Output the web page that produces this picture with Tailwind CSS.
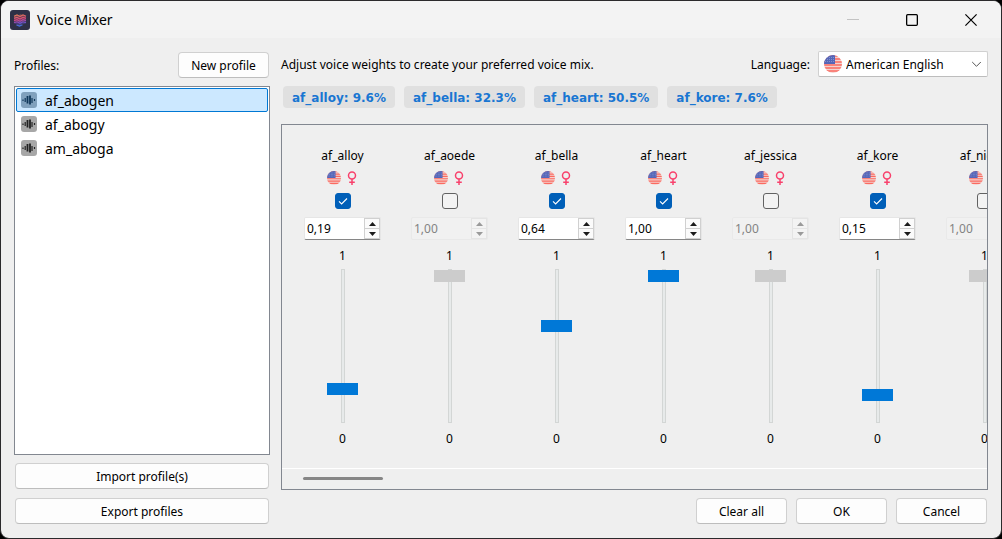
<!DOCTYPE html>
<html lang="en">
<head>
<meta charset="utf-8">
<meta name="viewport" content="width=device-width, initial-scale=1">
<title>Voice Mixer</title>
<script src="https://cdn.jsdelivr.net/npm/@tailwindcss/browser@4"></script>
</head>
<body class="bg-black">
<svg class="absolute size-0" aria-hidden="true">
  <defs>
    <clipPath id="disc"><circle cx="9" cy="9" r="9"/></clipPath>
    <symbol id="flag" viewBox="0 0 18 18">
      <g clip-path="url(#disc)">
        <rect width="18" height="18" fill="#f3d3cf"/>
        <path d="M0 1h18M0 4h18M0 7h18M0 10h18M0 13h18M0 16h18" stroke="#fb6a60" stroke-width="1.5"/>
        <rect width="11" height="9" fill="#5566b8"/>
        <path d="M1 2.500h10M1 4.500h10M1 6.500h10" stroke="#8d99d2" stroke-width=".8" stroke-dasharray="1 1"/>
      </g>
    </symbol>
    <symbol id="female" viewBox="0 0 10 14">
      <g fill="none" stroke="#f8416c" stroke-width="1.500">
        <circle cx="5" cy="4.500" r="3.500"/><path d="M5 8v6M2.200 11.200h5.600"/>
      </g>
    </symbol>
    <symbol id="wave" viewBox="0 0 16 16">
      <rect width="16" height="16" rx="3" fill="currentColor" opacity=".4"/>
      <path d="M2 7.500v1.500M4.200 6v4M11 6v5M13.500 7v2" stroke="currentColor" stroke-width="1.200" fill="none"/>
      <path d="M6.500 4v7.500M9 3.500v9" stroke="currentColor" stroke-width="1.800" fill="none"/>
    </symbol>
    <linearGradient id="glow" gradientUnits="userSpaceOnUse" x1="8" y1="3" x2="10" y2="17">
      <stop offset="0" stop-color="#e08a4c"/><stop offset=".45" stop-color="#d8487c"/><stop offset=".7" stop-color="#7a4fc8"/><stop offset="1" stop-color="#2f7fe8"/>
    </linearGradient>
  </defs>
</svg>

<div class="flex min-h-screen flex-col overflow-hidden rounded-[9px] border border-[#2b2a2c] bg-[#efefef] font-['Noto_Sans',sans-serif] text-xs text-black">
  <header class="flex h-[37px] items-center bg-[#f3f3f3] pl-[9px] pr-6">
    <svg class="size-5" viewBox="0 0 20 20" aria-hidden="true">
      <rect width="20" height="20" rx="3" fill="#2e3046"/>
      <path d="M4 6l2.500-1 1.500.5L10.500 4l2 1L16 6v7l-2.500 1.200-1.500-.4L9.500 16.200 7 14.800 4 13z" fill="url(#glow)" opacity=".35"/>
      <path d="M4 6.200l3-1.200 3 1.500 3-1.500 3 1.200M4 8.400l3-1 3 1.600 3-1.600 3 1M4 10.600l3-1 3 1.600 3-1.600 3 1M4 12.800l3-1 3 1.600 3-1.600 3 1M6.500 15l3 1 3-1.200" fill="none" stroke="url(#glow)" stroke-width="1.200"/>
    </svg>
    <h1 class="ml-[7px] flex-1 text-sm">Voice Mixer</h1>
    <div class="flex items-center gap-[47px]">
      <button aria-label="Minimize" disabled><svg class="size-3" viewBox="0 0 12 12"><path d="M0 5.500h12" stroke="#c3c3c3"/></svg></button>
      <button aria-label="Maximize"><svg class="size-3" viewBox="0 0 12 12"><rect x=".65" y=".65" width="10.700" height="10.700" rx="1" fill="none" stroke="#000" stroke-width="1.300"/></svg></button>
      <button aria-label="Close"><svg class="size-3" viewBox="0 0 12 12"><path d="M.4.4l11.200 11.200M11.600.4L.4 11.600" stroke="#000" stroke-width="1.200"/></svg></button>
    </div>
  </header>

  <main class="flex flex-1 gap-[11px] px-[13px] pb-[14px] pt-[13px]">
    <section class="flex w-64 shrink-0 flex-col">
      <div class="flex items-center justify-between pr-px">
        <h2 class="pt-0.5">Profiles:</h2>
        <button class="mt-px h-[26px] w-[91px] rounded border border-[#d0d0d0] border-b-[#bdbdbd] bg-[#fdfdfd] pt-0.5">New profile</button>
      </div>
      <ul class="mt-2 flex-1 border border-[#828790] bg-white p-px text-sm">
        <li class="flex h-6 items-center gap-2 rounded-xs border border-[#0078d4] bg-[#cce8ff] pl-1"><svg class="size-4 text-[#10385a]"><use href="#wave"/></svg><span class="pt-0.5">af_abogen</span></li>
        <li class="flex h-6 items-center gap-2 pl-[5px]"><svg class="size-4 text-[#222]"><use href="#wave"/></svg><span class="pt-0.5">af_abogy</span></li>
        <li class="flex h-6 items-center gap-2 pl-[5px]"><svg class="size-4 text-[#222]"><use href="#wave"/></svg><span class="pt-0.5">am_aboga</span></li>
      </ul>
      <div class="mt-2 flex flex-col gap-[9px] px-px">
        <button class="h-[26px] rounded border border-[#d0d0d0] border-b-[#bdbdbd] bg-[#fdfdfd] pt-0.5">Import profile(s)</button>
        <button class="h-[26px] rounded border border-[#d0d0d0] border-b-[#bdbdbd] bg-[#fdfdfd] pt-0.5">Export profiles</button>
      </div>
    </section>

    <section class="flex min-w-0 flex-1 flex-col">
      <div class="flex items-center justify-between">
        <p class="pt-0.5">Adjust voice weights to create your preferred voice mix.</p>
        <div class="flex items-center gap-2">
          <label for="language" class="pt-0.5">Language:</label>
          <div class="flex h-[26px] w-[170px] items-center rounded-xs border border-[#d0d0d0] border-b-[#bdbdbd] bg-white pl-[5px] pr-[5px]">
            <svg class="size-[18px]"><use href="#flag"/></svg>
            <select id="language" class="min-w-0 flex-1 appearance-none bg-transparent pl-1 pt-0.5 outline-none"><option>American English</option></select>
            <svg class="h-3 w-[11px]" viewBox="0 0 11 12" aria-hidden="true"><path d="M1.200 4l4.300 4.300L9.800 4" fill="none" stroke="#555"/></svg>
          </div>
        </div>
      </div>
      <ul class="mt-[9px] flex gap-[9px] pl-0.5 font-['DejaVu_Sans',sans-serif] text-xs font-bold text-[#1976d2]">
        <li class="flex h-[22px] items-center rounded bg-[#e0e0e0] px-[9px] pt-0.5">af_alloy: 9.6%</li>
        <li class="flex h-[22px] items-center rounded bg-[#e0e0e0] px-[9px] pt-0.5">af_bella: 32.3%</li>
        <li class="flex h-[22px] items-center rounded bg-[#e0e0e0] px-[9px] pt-0.5">af_heart: 50.5%</li>
        <li class="flex h-[22px] items-center rounded bg-[#e0e0e0] px-[9px] pt-0.5">af_kore: 7.6%</li>
      </ul>
      <div class="mt-4 flex flex-1 flex-col border border-[#828790]">
        <div id="voices" class="flex flex-1 gap-[30px] overflow-hidden border-b border-white pl-[22px] pt-[22px]"></div>
        <div class="flex h-5 items-center pb-0.5 pl-[21px]"><div class="h-[3px] w-20 rounded-full bg-[#868686]"></div></div>
      </div>
      <div class="mt-2 flex justify-end gap-[9px] pr-px">
        <button class="h-[26px] w-[91px] rounded border border-[#d0d0d0] border-b-[#bdbdbd] bg-[#fdfdfd] pt-0.5">Clear all</button>
        <button class="h-[26px] w-[91px] rounded border border-[#d0d0d0] border-b-[#bdbdbd] bg-[#fdfdfd] pt-0.5">OK</button>
        <button class="h-[26px] w-[91px] rounded border border-[#d0d0d0] border-b-[#bdbdbd] bg-[#fdfdfd] pt-0.5">Cancel</button>
      </div>
    </section>
  </main>
</div>

<script>
  const voices = [
    ['af_alloy', 0.19, true], ['af_aoede', 1, false], ['af_bella', 0.64, true], ['af_heart', 1, true],
    ['af_jessica', 1, false], ['af_kore', 0.15, true], ['af_nicole', 1, false],
  ];
  document.getElementById('voices').innerHTML = voices.map(([name, weight, on]) => `
    <div role="group" aria-label="${name}" class="flex w-[77px] shrink-0 flex-col items-center">
      <label for="${name}" class="h-[18px] leading-[18px]">${name}</label>
      <div class="mt-1.5 flex h-[14px] items-center gap-1.5 pr-0.5">
        <svg class="size-[14px]" aria-hidden="true"><use href="#flag"/></svg>
        <svg class="h-[14px] w-[10px]" aria-hidden="true"><use href="#female"/></svg>
      </div>
      <div class="mt-2 grid size-4">
        <input id="${name}" type="checkbox" ${on ? 'checked' : ''} class="peer col-start-1 row-start-1 size-4 appearance-none rounded-[3px] border border-[#626262] bg-[#f3f3f3] checked:border-[#005fb8] checked:bg-[#005fb8]">
        <svg class="pointer-events-none invisible col-start-1 row-start-1 size-4 peer-checked:visible" viewBox="0 0 16 16"><path d="M4 8.300l2.600 2.600L12 5.500" fill="none" stroke="#fff" stroke-width="1.100"/></svg>
      </div>
      <div class="mt-2 flex h-[23px] w-full rounded-xs border ${on ? 'border-[#e6e6e6] border-b-[#868686] bg-white' : 'border-[#e9e9e9] bg-[#f1f1f1]'}">
        <input type="text" aria-label="${name} weight" value="${weight.toFixed(2).replace('.', ',')}" ${on ? '' : 'disabled'} class="min-w-0 flex-1 bg-transparent pl-0.5 text-black disabled:text-[#838383]">
        <div class="flex w-4 flex-col border ${on ? 'border-[#d0d0d0] bg-[#fbfbfb] text-[#1b1b1b]' : 'border-[#e4e4e4] bg-[#f3f3f3] text-[#9a9a9a]'}">
          <button aria-label="Increase ${name}" class="flex flex-1 items-center justify-center border-b border-inherit"><svg class="h-1 w-[7px]" viewBox="0 0 7 4"><path d="M0 4L3.500 0 7 4z" fill="currentColor"/></svg></button>
          <button aria-label="Decrease ${name}" class="flex flex-1 items-center justify-center"><svg class="h-1 w-[7px]" viewBox="0 0 7 4"><path d="M0 0l3.500 4L7 0z" fill="currentColor"/></svg></button>
        </div>
      </div>
      <span class="mt-2 h-4 leading-4">1</span>
      <input type="range" min="0" max="1" step="0.01" value="${weight}" aria-label="${name} level" ${on ? '' : 'disabled'} class="mt-[5px] h-[154px] w-[31px] appearance-none bg-transparent [direction:rtl] [writing-mode:vertical-lr] [&::-webkit-slider-runnable-track]:w-1 [&::-webkit-slider-runnable-track]:border [&::-webkit-slider-runnable-track]:border-[#d3d6d5] [&::-webkit-slider-runnable-track]:bg-[#e7eaea] [&::-webkit-slider-thumb]:-ml-[15px] [&::-webkit-slider-thumb]:h-3 [&::-webkit-slider-thumb]:w-[31px] [&::-webkit-slider-thumb]:appearance-none [&::-webkit-slider-thumb]:bg-[#0078d7] disabled:[&::-webkit-slider-thumb]:bg-[#cccccc]">
      <span class="mt-2 h-4 leading-4">0</span>
    </div>`).join('');
</script>
</body>
</html>
